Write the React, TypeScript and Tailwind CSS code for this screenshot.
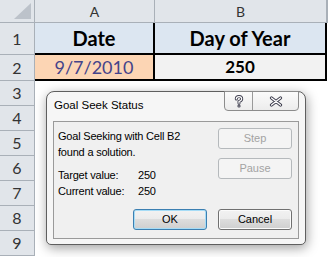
import React from 'react';

const headCell = 'flex items-center justify-center bg-[#e1e5ea] border-r border-b border-[#a9b0b8] text-[#333]';

function WinButton({ label, disabled, focused }: { label: string; disabled?: boolean; focused?: boolean }) {
  let cls = 'w-[74px] h-[21px] rounded-[3px] border text-[11px] flex items-center justify-center ';
  if (disabled) {
    cls += 'border-[#b5b9bc] bg-[#f4f4f4] text-[#a3a3a3]';
  } else if (focused) {
    cls += 'border-[#3c7fb1] bg-[linear-gradient(#f2f2f2,#ebebeb_50%,#dddddd_50%,#cfcfcf)] shadow-[inset_0_0_0_1px_#a6dcf6] text-black';
  } else {
    cls += 'border-[#707070] bg-[linear-gradient(#f2f2f2,#ebebeb_50%,#dddddd_50%,#cfcfcf)] shadow-[inset_0_0_0_1px_#fbfbfb] text-black';
  }
  return <div className={cls}>{label}</div>;
}

function GoalSeekDialog() {
  return (
    <div className="absolute left-[46px] top-[91px] w-[260px] h-[154px] flex flex-col rounded-t-[8px] rounded-b-[5px] border border-[#5f5f5f] bg-[#f6f6f6] shadow-[1px_3px_12px_rgba(0,0,0,0.38)] font-['Liberation_Sans',Arial,sans-serif]">
      {/* title bar */}
      <div className="h-[29px] flex items-center pl-[7px] pb-[2px] text-[11.5px] text-black">Goal Seek Status</div>

      {/* caption buttons */}
      <div className="absolute top-[-1px] right-[6px] w-[75px] h-[20px] flex rounded-b-[4px] border border-[#8c8c8c] bg-[linear-gradient(#fbfbfb,#ececec)] overflow-hidden">
        <div className="w-[28px] flex items-center justify-center border-r border-[#9a9a9a]">
          <svg width="10" height="13" viewBox="0 0 10 13">
            <path d="M2.3 4 Q2.3 1.6 5 1.6 Q7.7 1.6 7.7 3.9 Q7.7 5.4 5 6.6 L5 8.2" fill="none" stroke="#3f3f4f" strokeWidth="3" strokeLinecap="round" />
            <path d="M2.3 4 Q2.3 1.6 5 1.6 Q7.7 1.6 7.7 3.9 Q7.7 5.4 5 6.6 L5 8.2" fill="none" stroke="#fff" strokeWidth="1.2" strokeLinecap="round" />
            <circle cx="5" cy="11" r="1.6" fill="#3f3f4f" />
            <circle cx="5" cy="11" r="0.6" fill="#fff" />
          </svg>
        </div>
        <div className="flex-1 flex items-center justify-center">
          <svg width="14" height="11" viewBox="0 0 14 11">
            <path d="M2.5 2 L11.5 9 M11.5 2 L2.5 9" stroke="#3f3f4f" strokeWidth="3.2" strokeLinecap="round" />
            <path d="M2.5 2 L11.5 9 M11.5 2 L2.5 9" stroke="#fff" strokeWidth="1.3" strokeLinecap="round" />
          </svg>
        </div>
      </div>

      {/* client area */}
      <div className="mx-[6px] h-[118px] flex flex-col border border-[#9a9a9a] bg-[#f0f0f0] pt-[6px] pr-[6px] pb-[8px] text-[11px] text-black">
        <div className="flex">
          <div className="flex-1 pl-[4px] leading-[16px] tracking-[-0.2px]">
            <div>Goal Seeking with Cell B2</div>
            <div>found a solution.</div>
            <div className="mt-[7px] flex">
              <span className="w-[80px]">Target value:</span>
              <span>250</span>
            </div>
            <div className="flex">
              <span className="w-[80px]">Current value:</span>
              <span>250</span>
            </div>
          </div>
          <div className="flex flex-col gap-[9px]">
            <WinButton label="Step" disabled />
            <WinButton label="Pause" disabled />
          </div>
        </div>
        <div className="mt-auto flex justify-end gap-[11px]">
          <WinButton label="OK" focused />
          <WinButton label="Cancel" />
        </div>
      </div>
    </div>
  );
}

export default function App() {
  const rowNums = [3, 4, 5, 6, 7, 8, 9];
  return (
    <div className="relative w-[328px] h-[257px] overflow-hidden bg-white font-['Lato','Liberation_Sans',sans-serif]">
      <div className="grid grid-cols-[35px_120px_172px_1fr] grid-rows-[23px_32px_26px_repeat(7,25px)]">
        {/* column headers */}
        <div className={headCell + ' relative'}>
          <svg className="absolute right-[3px] bottom-[3px]" width="17" height="16" viewBox="0 0 17 16">
            <polygon points="17,0 17,16 0,16" fill="#bcc2ca" />
          </svg>
        </div>
        <div className={headCell + ' text-[14px]'}>A</div>
        <div className={headCell + ' text-[14px]'}>B</div>
        <div className={headCell}></div>

        {/* row 1 */}
        <div className={headCell + ' text-[16px]'}>1</div>
        <div className="flex items-center justify-center bg-[#dce6f1] border-r-2 border-b-2 border-black text-[20px] font-bold text-black">Date</div>
        <div className="flex items-center justify-center bg-[#dce6f1] border-r-2 border-b-2 border-black text-[20px] font-bold text-black">Day of Year</div>
        <div className="bg-white"></div>

        {/* row 2 */}
        <div className={headCell + ' text-[16px]'}>2</div>
        <div className="flex items-center justify-center bg-[#fcd5b4] border-r-2 border-b-2 border-black text-[18px] text-[#44438a]">9/7/2010</div>
        <div className="flex items-center justify-center bg-[#f2f2f2] border-r-2 border-b-2 border-black text-[17px] font-bold text-black">250</div>
        <div className="bg-white"></div>

        {rowNums.map((n) => (
          <React.Fragment key={n}>
            <div className={headCell + ' text-[16px]'}>{n}</div>
            <div className="bg-white"></div>
            <div className="bg-white"></div>
            <div className="bg-white"></div>
          </React.Fragment>
        ))}
      </div>

      <GoalSeekDialog />
    </div>
  );
}
